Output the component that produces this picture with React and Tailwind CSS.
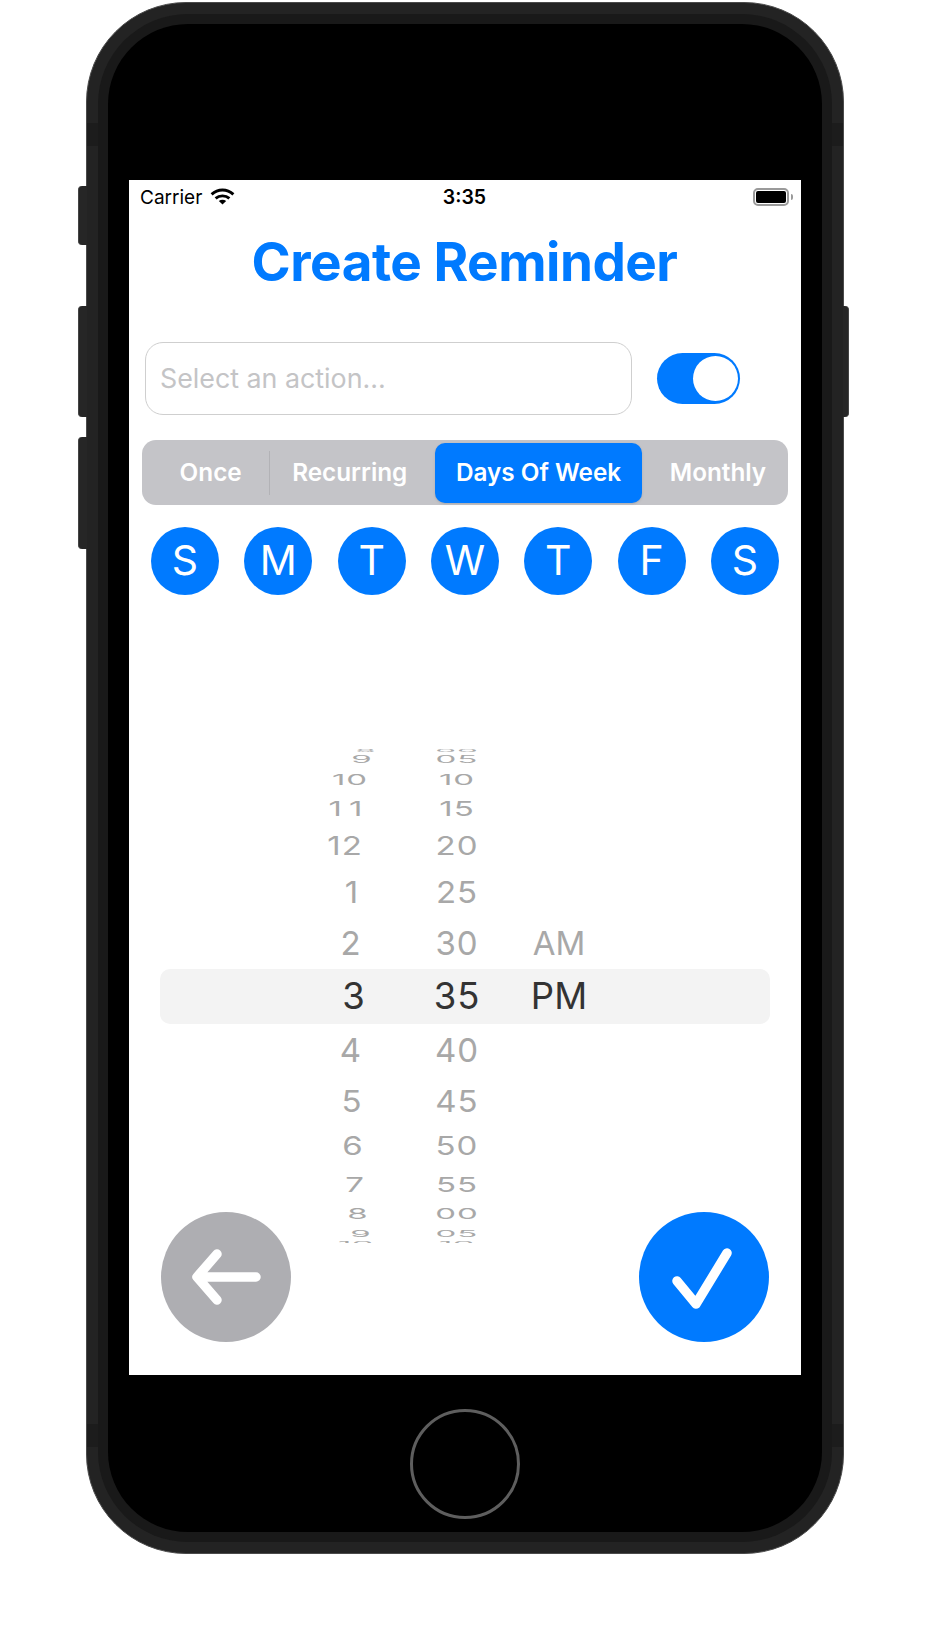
const font = "[font-family:Inter,'Liberation_Sans',sans-serif]";

// wheel rows, top to bottom: row height and how flat the label gets
const rows = [
  { h: 'h-[2.5px]', sy: 'scale-y-[.12]' },
  { h: 'h-[15.5px]', sy: 'scale-y-[.3]' },
  { h: 'h-[24.5px]', sy: 'scale-y-[.45]' },
  { h: 'h-[33.5px]', sy: 'scale-y-[.62]' },
  { h: 'h-[42.5px]', sy: 'scale-y-[.78]' },
  { h: 'h-[49.5px]', sy: 'scale-y-[.92]' },
  { h: 'h-[52.5px]', sy: 'scale-y-[1]' },
  { h: 'h-[53.5px]', sy: 'scale-y-[1]' },
  { h: 'h-[54.5px]', sy: 'scale-y-[1]' },
  { h: 'h-[47.5px]', sy: 'scale-y-[.92]' },
  { h: 'h-[42.5px]', sy: 'scale-y-[.78]' },
  { h: 'h-[33.5px]', sy: 'scale-y-[.62]' },
  { h: 'h-[24.5px]', sy: 'scale-y-[.45]' },
  { h: 'h-[15.5px]', sy: 'scale-y-[.28]' },
  { h: 'h-[4.5px]', sy: 'scale-y-[.14]' },
];

const hours = [
  { t: '8', x: 'translate-x-[14px]' },
  { t: '9', x: 'translate-x-[10px]' },
  { t: '10', x: '-translate-x-[2px]' },
  { t: '11', x: '-translate-x-[3px] tracking-[7px]' },
  { t: '12', x: '-translate-x-[7px]' },
  { t: '1', x: '' },
  { t: '2', x: '-translate-x-[1px]' },
  { t: '3', x: 'translate-x-[2px]' },
  { t: '4', x: '-translate-x-[1px]' },
  { t: '5', x: '' },
  { t: '6', x: 'translate-x-[1px]' },
  { t: '7', x: 'translate-x-[3px]' },
  { t: '8', x: 'translate-x-[6px]' },
  { t: '9', x: 'translate-x-[9px]' },
  { t: '10', x: 'translate-x-[4px]' },
];

const minutes = ['00', '05', '10', '15', '20', '25', '30', '35', '40', '45', '50', '55', '00', '05', '10'];
const periods = ['', '', '', '', '', '', 'AM', 'PM', '', '', '', '', '', '', ''];
const days = ['S', 'M', 'T', 'W', 'T', 'F', 'S'];

function Wheel({ labels, offsets, width, spacing }) {
  return (
    <div className={`${width} ${spacing} flex flex-col mt-[1px]`}>
      {rows.map((row, i) => (
        <div key={i} className={`${row.h} shrink-0 flex items-center justify-center leading-none`}>
          <span
            className={`${row.sy} ${offsets ? offsets[i].x : ''} ${i === 7 ? 'text-[36.5px] text-[#333333]' : 'text-[33px] text-[#a8a8a8]'}`}
          >
            {labels[i]}
          </span>
        </div>
      ))}
    </div>
  );
}

function StatusBar() {
  return (
    <div className="h-[36px] flex items-center justify-between pl-[11px] pr-[8px] text-black">
      <div className="w-[130px] flex items-center gap-[8px] text-[19px]">
        <span>Carrier</span>
        <svg width="25" height="17" viewBox="0 0 25 17" className="-mt-[3px]" fill="none" stroke="#000" strokeWidth="2.9">
          <path d="M1.6 6.4C8 .6 17 .6 23.4 6.4" />
          <path d="M5.6 10.4c3.9-3.4 9.9-3.4 13.8 0" />
          <path d="M12.5 16.6 8.8 13c2.1-1.6 5.3-1.6 7.4 0z" fill="#000" stroke="none" />
        </svg>
      </div>
      <span className="text-[19.5px] font-semibold">3:35</span>
      <div className="w-[134px] flex items-center justify-end gap-[2px] -mt-[2px]">
        <div className="w-[36px] h-[18px] rounded-[5px] border-2 border-[#9a9a9a] p-px">
          <div className="w-full h-full rounded-[2px] bg-black" />
        </div>
        <div className="w-[2px] h-[6px] rounded-r-full bg-[#9a9a9a]" />
      </div>
    </div>
  );
}

function Screen() {
  return (
    <div className={`${font} mx-[21px] h-[1195px] bg-white flex flex-col`}>
      <StatusBar />

      <h1 className="mt-[11px] h-[72px] flex items-center justify-center pr-[1px] text-[53px] font-bold text-[#007aff] tracking-[-0.5px]">
        Create Reminder
      </h1>

      {/* Action field and switch */}
      <div className="mt-[43px] flex items-center pl-[16px] pr-[60px]">
        <div className="w-[487px] h-[73px] flex items-center pl-[14px] rounded-[18px] border border-[#cfcfcf] text-[26.8px] text-[#c4c4c6]">
          Select an action...
        </div>
        <div className="ml-[25px] w-[83px] h-[51px] rounded-full bg-[#007aff] flex items-center justify-end pr-[2px]">
          <div className="w-[45px] h-[45px] rounded-full bg-white" />
        </div>
      </div>

      {/* Schedule type */}
      <div className="mt-[25px] mx-[13px] h-[65px] rounded-[14px] bg-[#c4c4c8] flex items-center text-[24.3px] font-semibold text-white">
        <div className="w-[128px] pl-[10px] text-center">Once</div>
        <div className="w-px h-[44px] bg-[#b2b2b6]" />
        <div className="w-[166px] pr-[6px] text-center">Recurring</div>
        <div className="w-[208px] h-[60px] rounded-[10px] bg-[#007aff] shadow-sm flex items-center justify-center">Days Of Week</div>
        <div className="w-[147px] pl-[6px] text-center">Monthly</div>
      </div>

      {/* Day picker */}
      <div className="mt-[22px] px-[22px] flex justify-between">
        {days.map((d, i) => (
          <div key={i} className="w-[68px] h-[68px] rounded-full bg-[#007aff] flex items-center justify-center text-[41px] text-white">
            {d}
          </div>
        ))}
      </div>

      {/* Time wheel */}
      <div className="relative mt-[153px] h-[495px] shrink-0 overflow-hidden flex pl-[171px]">
        <div className="absolute left-[31px] right-[31px] top-[221px] h-[55px] rounded-[10px] bg-[#f3f3f3]" />
        <div className="relative flex">
          <Wheel labels={hours.map(h => h.t)} offsets={hours} width="w-[104px]" spacing="tracking-[1px]" />
          <Wheel labels={minutes} width="w-[106px]" spacing="tracking-[1px]" />
          <Wheel labels={periods} width="w-[98px]" spacing="tracking-normal" />
        </div>
      </div>

      {/* Back and confirm */}
      <div className="relative -mt-[31px] px-[32px] flex justify-between">
        <button className="w-[130px] h-[130px] rounded-full bg-[#aeaeb2] flex items-center justify-center">
          <svg width="130" height="130" viewBox="0 0 130 130" fill="none" stroke="#fff" strokeWidth="9.5" strokeLinecap="round" strokeLinejoin="round">
            <path d="M36 65h59M56 42 36 65l20 23" />
          </svg>
        </button>
        <button className="w-[130px] h-[130px] rounded-full bg-[#007aff] flex items-center justify-center">
          <svg width="130" height="130" viewBox="0 0 130 130" fill="none" stroke="#fff" strokeWidth="9.5" strokeLinecap="round" strokeLinejoin="round">
            <path d="M38 69 57 92 88 41" />
          </svg>
        </button>
      </div>
    </div>
  );
}

export default function App() {
  return (
    <div className="w-[930px] h-[1640px] bg-white pt-[2px]">
      <div className="relative ml-[86px] w-[758px] h-[1552px] rounded-[100px] bg-[#232323] p-[11px] border border-[#4a4a4a]">
        {/* Side buttons */}
        <div className="absolute -left-[9px] top-[183px] w-[9px] h-[59px] rounded-l-[4px] bg-[#262626] border-l border-[#444444]" />
        <div className="absolute -left-[9px] top-[303px] w-[9px] h-[111px] rounded-l-[4px] bg-[#262626] border-l border-[#444444]" />
        <div className="absolute -left-[9px] top-[434px] w-[9px] h-[112px] rounded-l-[4px] bg-[#262626] border-l border-[#444444]" />
        <div className="absolute -right-[6px] top-[303px] w-[6px] h-[111px] rounded-r-[4px] bg-[#262626] border-r border-[#444444]" />

        {/* Antenna bands */}
        <div className="absolute left-0 top-[120px] w-[11px] h-[23px] bg-[#1c1c1c]" />
        <div className="absolute right-0 top-[120px] w-[11px] h-[23px] bg-[#1c1c1c]" />
        <div className="absolute left-0 top-[1421px] w-[11px] h-[23px] bg-[#1c1c1c]" />
        <div className="absolute right-0 top-[1421px] w-[11px] h-[23px] bg-[#1c1c1c]" />

        <div className="relative h-full rounded-[90px] bg-[#191919] p-[10px]">
          <div className="h-full rounded-[80px] bg-black pt-[156px] flex flex-col items-stretch">
            <Screen />
            {/* Home button */}
            <div className="mt-[34px] mx-auto w-[110px] h-[110px] rounded-full border-[3px] border-[#5e5e5e]" />
          </div>
        </div>
      </div>
    </div>
  );
}
